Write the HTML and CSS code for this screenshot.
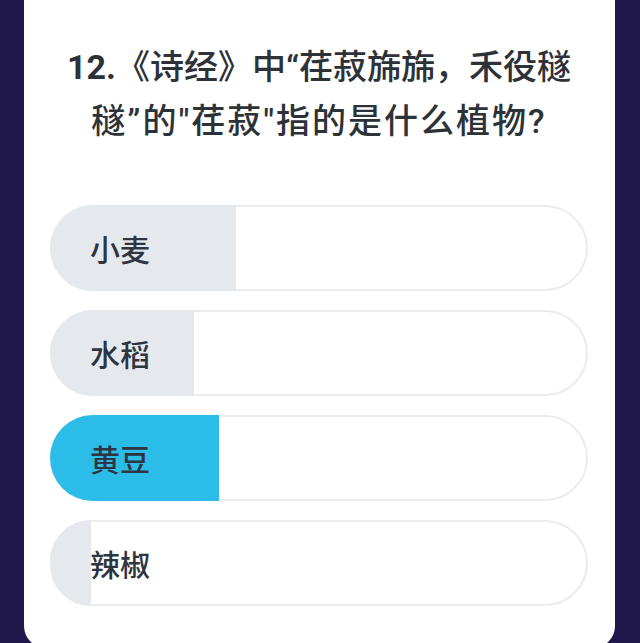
FILE: index.html
```html
<!DOCTYPE html>
<html lang="zh-CN">
<head>
<meta charset="utf-8">
<link rel="stylesheet" href="styles.css">
</head>
<body>
<div class="card">
  <h1 class="question"><span class="num">12.</span>《诗经》中“荏菽旆旆，禾役穟<br><span class="line2">穟”的"荏菽"指的是什么植物?</span></h1>
  <div class="options">
    <div class="pill"><div class="fill" style="width:186px"></div><span class="label">小麦</span></div>
    <div class="pill"><div class="fill" style="width:144px"></div><span class="label">水稻</span></div>
    <div class="pill"><div class="fill fill-active" style="width:169px"></div><span class="label">黄豆</span></div>
    <div class="pill"><div class="fill" style="width:41px"></div><span class="label">辣椒</span></div>
  </div>
</div>
</body>
</html>
```
FILE: styles.css
```css
html, body {
  margin: 0;
  height: 100%;
  overflow: hidden;
}
body {
  background: #20174a;
  padding: 0 25px 0 24px;
  font-family: Roboto, "Noto Sans CJK SC", sans-serif;
}
.card {
  background: #ffffff;
  height: 648px;
  border-radius: 0 0 22px 22px;
  padding: 40px 27px 0 26px;
  box-sizing: border-box;
}
.question {
  margin: 0;
  text-align: center;
  font-size: 34px;
  line-height: 54px;
  font-weight: 500;
  color: #2d3239;
  white-space: nowrap;
}
.num {
  font-weight: 700;
}
.line2 {
  letter-spacing: 2px;
}
.options {
  margin-top: 57px;
  display: flex;
  flex-direction: column;
  gap: 19px;
}
.pill {
  position: relative;
  height: 86px;
  box-sizing: border-box;
  border: 2px solid #ececec;
  border-radius: 43px;
  display: flex;
  align-items: center;
  padding-left: 38px;
}
.fill {
  position: absolute;
  left: -2px;
  top: -2px;
  bottom: -2px;
  background: #e5e9ee;
  border-radius: 43px 0 0 43px;
}
.fill-active {
  background: #2bbde7;
}
.label {
  position: relative;
  font-size: 30px;
  color: #2e3440;
  font-weight: 500;
}
```
